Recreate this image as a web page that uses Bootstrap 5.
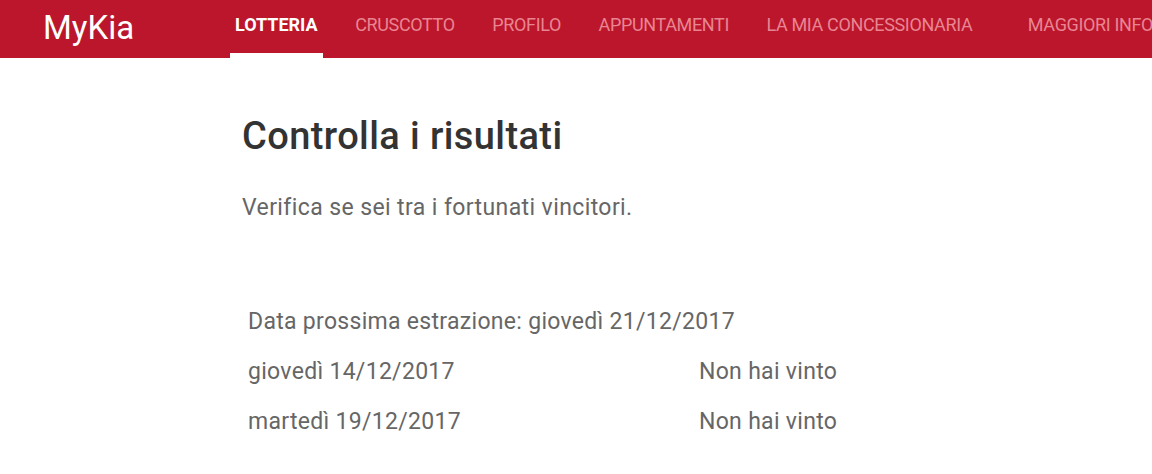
<!DOCTYPE html>
<html lang="it">
<head>
<meta charset="utf-8">
<title>MyKia</title>
<link href="https://cdn.jsdelivr.net/npm/bootstrap@5.3.0/dist/css/bootstrap.min.css" rel="stylesheet">
<style>
html,body{height:100%;overflow:hidden}
body{font-family:Roboto,"Liberation Sans",sans-serif;background:#fff;color:#666}
.kia-bar{background:#bb162b;height:58px;padding:0;flex-wrap:nowrap;overflow:hidden;align-items:stretch;justify-content:flex-start}
.kia-brand{color:#fff;font-size:33px;line-height:56px;padding:0;margin:0 0 0 43px;flex:0 0 187px;width:187px}
.kia-brand:hover{color:#fff}
.kia-nav{flex-wrap:nowrap;gap:27.5px;flex-direction:row;flex:none}
.kia-nav .nav-link{color:#e98592;font-size:18px;line-height:50px;height:58px;padding:0 5px;white-space:nowrap;border-bottom:5px solid transparent;letter-spacing:-.35px}
.kia-nav .nav-link.active{color:#fff;font-weight:700;border-bottom-color:#fff;letter-spacing:0}
.kia-nav .kia-gap{margin-left:18px}
.kia-main{padding-left:242px;padding-right:100px}
.kia-title{color:#333;font-size:38px;font-weight:500;line-height:46px;margin:55px 0 0;letter-spacing:.4px}
.kia-sub{font-size:23px;line-height:30px;margin:34px 0 0;letter-spacing:.4px}
.kia-rows{margin:84px 0 0 6px;font-size:23px;line-height:30px;letter-spacing:.3px}
.kia-row{display:flex;height:50px}
.kia-date{width:451px}
</style>
</head>
<body>
<nav class="navbar kia-bar">
<a class="navbar-brand kia-brand" href="#">MyKia</a>
<ul class="nav kia-nav">
<li class="nav-item"><a class="nav-link active" href="#">LOTTERIA</a></li>
<li class="nav-item"><a class="nav-link" href="#">CRUSCOTTO</a></li>
<li class="nav-item"><a class="nav-link" href="#">PROFILO</a></li>
<li class="nav-item"><a class="nav-link" href="#">APPUNTAMENTI</a></li>
<li class="nav-item"><a class="nav-link" href="#">LA MIA CONCESSIONARIA</a></li>
<li class="nav-item kia-gap"><a class="nav-link" href="#">MAGGIORI INFO</a></li>
</ul>
</nav>
<main class="kia-main">
<h1 class="kia-title">Controlla i risultati</h1>
<p class="kia-sub">Verifica se sei tra i fortunati vincitori.</p>
<div class="kia-rows">
<div class="kia-row">Data prossima estrazione: giovedì 21/12/2017</div>
<div class="kia-row"><span class="kia-date">giovedì 14/12/2017</span><span>Non hai vinto</span></div>
<div class="kia-row"><span class="kia-date">martedì 19/12/2017</span><span>Non hai vinto</span></div>
</div>
</main>
<script src="https://cdn.jsdelivr.net/npm/bootstrap@5.3.0/dist/js/bootstrap.bundle.min.js"></script>
</body>
</html>
